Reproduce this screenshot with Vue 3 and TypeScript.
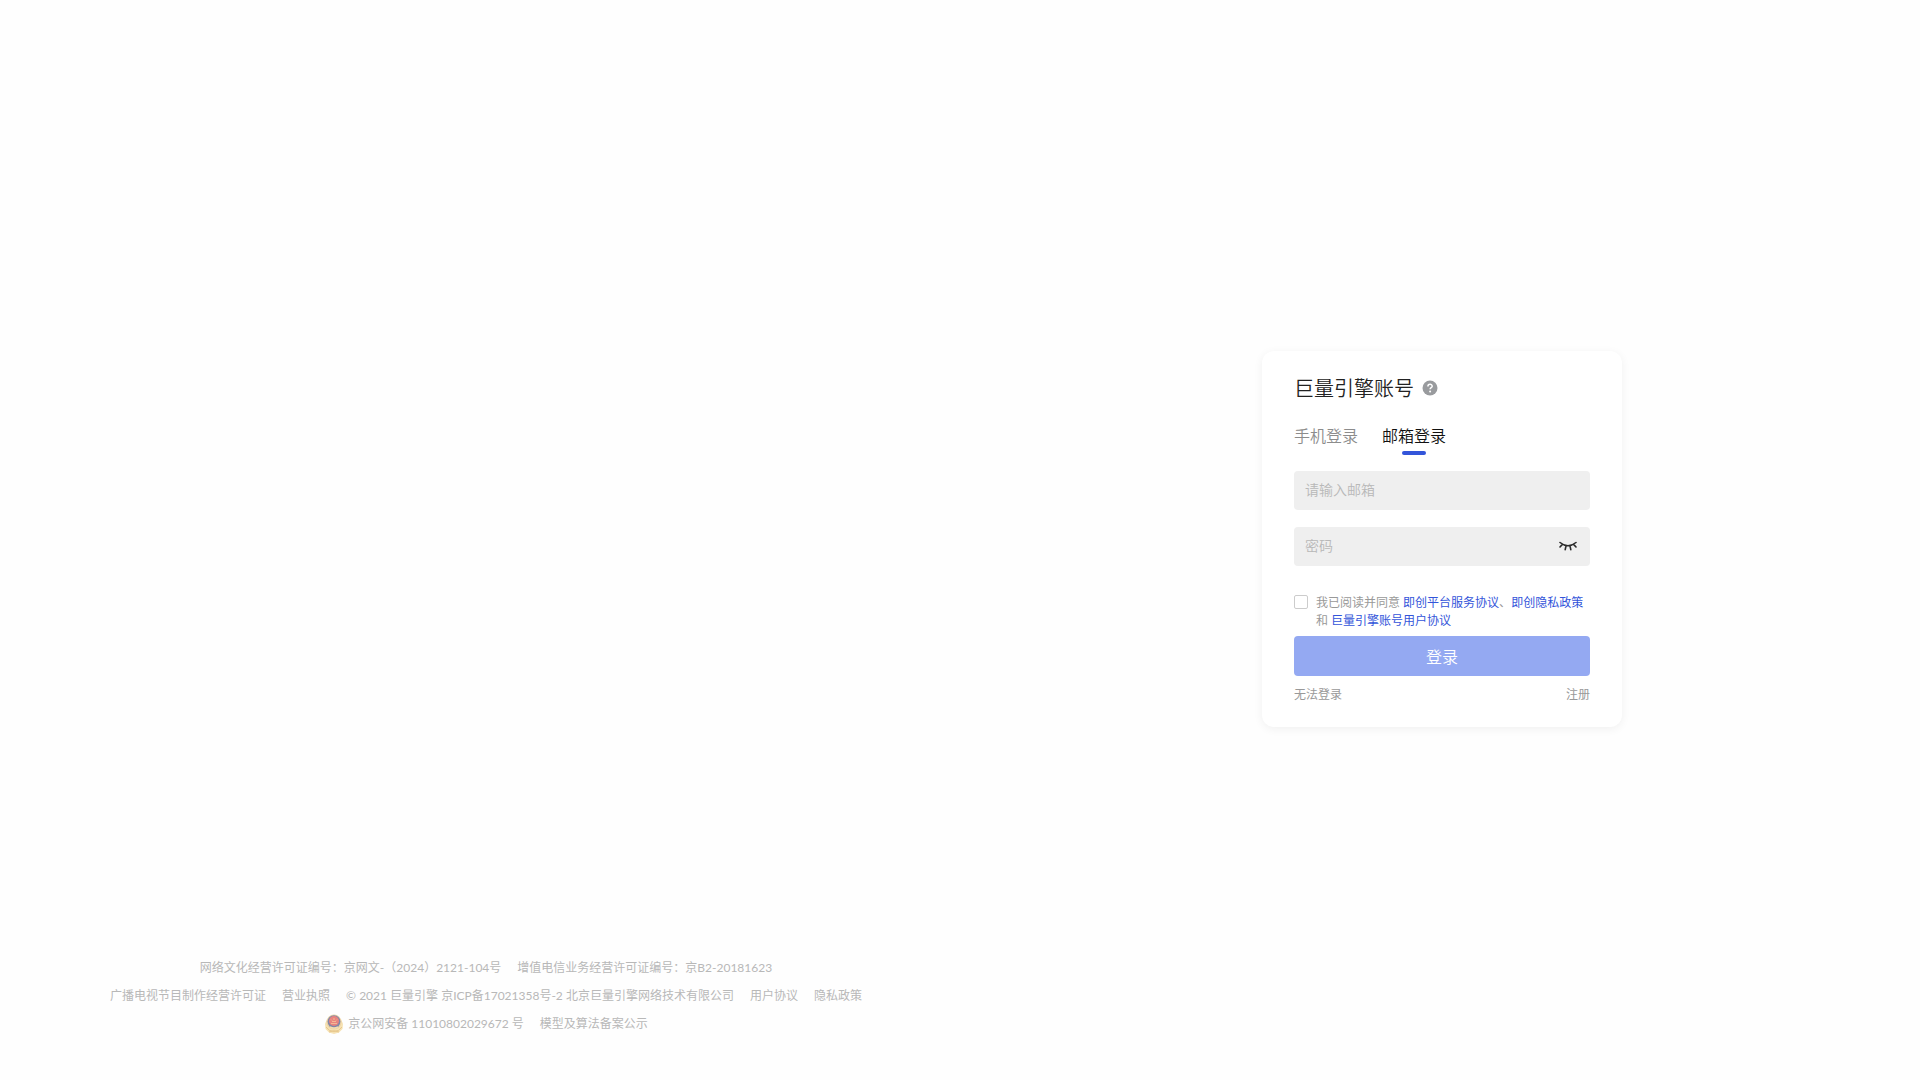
<script setup lang="ts">
import { ref } from 'vue'

interface FooterItem {
  text: string
  badge?: boolean
}

const email = ref('')
const password = ref('')
const agreed = ref(false)
const mode = ref('email')

const tabs = [
  { id: 'phone', label: '手机登录' },
  { id: 'email', label: '邮箱登录' },
]

const footerRows: FooterItem[][] = [
  [{ text: '网络文化经营许可证编号：京网文-（2024）2121-104号' }, { text: '增值电信业务经营许可证编号：京B2-20181623' }],
  [
    { text: '广播电视节目制作经营许可证' },
    { text: '营业执照' },
    { text: '© 2021 巨量引擎 京ICP备17021358号-2 北京巨量引擎网络技术有限公司' },
    { text: '用户协议' },
    { text: '隐私政策' },
  ],
  [{ text: '京公网安备 11010802029672 号', badge: true }, { text: '模型及算法备案公示' }],
]
</script>

<template>
  <div class="page">
    <section class="side">
      <footer class="footer">
        <div v-for="(row, i) in footerRows" :key="i" class="footer-row">
          <a v-for="item in row" :key="item.text" href="#" class="footer-link">
            <svg v-if="item.badge" class="badge" viewBox="0 0 20 20" aria-hidden="true">
              <path d="M3 5 1 10 1.500 15 5 18.500 10 20 15 18.500 18.500 15 19 10 17 5Z" fill="#f6e2b4" />
              <path d="M2 13Q5 17.500 10 17.500T18 13M5 18Q10 15.500 15 18" fill="none" stroke="#e8c88c" />
              <circle cx="10" cy="8" r="7.500" fill="#ecd3a4" />
              <circle cx="10" cy="7.600" r="6.400" fill="#8187a8" />
              <circle cx="10" cy="7" r="5" fill="#e8837e" />
              <path d="M7 9.500h6M8 7.500h4M10 4v2M7 5.500l1 1M13 5.500l-1 1" stroke="#f3b894" fill="none" />
              <path d="M6 12.800Q10 15 14 12.800" fill="none" stroke="#f3dfb2" stroke-width="1.500" />
            </svg>
            <span>{{ item.text }}</span>
          </a>
        </div>
      </footer>
    </section>

    <main class="main">
      <form class="card" @submit.prevent>
        <h1 class="title">
          巨量引擎账号
          <svg class="help" viewBox="0 0 16 16" aria-hidden="true">
            <circle cx="8" cy="8" r="7.500" fill="#999b9e" />
            <path d="M5.900 6.400C5.900 3.500 10.200 3.600 10.200 6.200 10.200 7.700 8.100 7.600 8.100 9.300" fill="none" stroke="#fff" stroke-width="1.500" />
            <circle cx="8.100" cy="11.500" r="1" fill="#fff" />
          </svg>
        </h1>

        <div class="tabs" role="tablist">
          <button
            v-for="tab in tabs"
            :key="tab.id"
            type="button"
            role="tab"
            class="tab"
            :class="{ active: mode === tab.id }"
            :aria-selected="mode === tab.id"
            @click="mode = tab.id"
          >
            {{ tab.label }}
          </button>
        </div>

        <div class="field">
          <input v-model="email" type="text" placeholder="请输入邮箱" aria-label="邮箱" />
        </div>
        <div class="field">
          <input v-model="password" type="password" placeholder="密码" aria-label="密码" />
          <button type="button" class="eye" aria-label="显示密码">
            <svg viewBox="0 0 18 10" aria-hidden="true">
              <path
                d="M1 1.500Q9 8 17 1.500M3.400 3.400 1 6M14.600 3.400 17 6M7 5 6.200 8.600M11 5l.8 3.600"
                fill="none"
                stroke="#2a2a2a"
                stroke-width="1.600"
                stroke-linecap="round"
              />
            </svg>
          </button>
        </div>

        <div class="agree">
          <input id="agree" v-model="agreed" type="checkbox" />
          <p>
            <label for="agree">我已阅读并同意</label>&nbsp;<a href="#">即创平台服务协议</a>、<a href="#">即创隐私政策</a>
            和 <a href="#">巨量引擎账号用户协议</a>
          </p>
        </div>

        <button type="submit" class="submit">登录</button>

        <div class="links">
          <a href="#">无法登录</a>
          <a href="#">注册</a>
        </div>
      </form>
    </main>
  </div>
</template>

<style>
body {
  margin: 0;
  background: #fefefe;
}
</style>

<style scoped>
.page {
  display: grid;
  grid-template-columns: 964fr 956fr;
  min-height: 100vh;
  font-family: Lato, 'Noto Sans CJK SC', sans-serif;
  font-size: 12px;
  color: #999;
}
.page * {
  box-sizing: border-box;
}
a {
  color: inherit;
  text-decoration: none;
}
button,
input {
  font-family: inherit;
  font-weight: inherit;
}
.side {
  display: flex;
  flex-direction: column;
  justify-content: flex-end;
}
.footer {
  padding: 0 0 42px 8px;
  color: #b8b8b8;
}
.footer-row {
  display: flex;
  flex-wrap: wrap;
  justify-content: center;
  gap: 0 16px;
  line-height: 28px;
}
.footer-link {
  display: flex;
  align-items: center;
  gap: 4px;
}
.badge {
  width: 20px;
  height: 20px;
}
.main {
  display: flex;
  align-items: center;
  justify-content: center;
  padding-bottom: 2px;
}
.card {
  width: 360px;
  padding: 21px 32px 22px;
  border-radius: 12px;
  background: #fff;
  box-shadow: 0 2px 10px rgba(0, 0, 0, 0.06);
}
.title {
  display: flex;
  align-items: center;
  gap: 8px;
  margin: 0 0 15px;
  font-size: 20px;
  font-weight: 350;
  line-height: 32px;
  color: #222;
}
.help {
  width: 16px;
  height: 16px;
}
.tabs {
  display: flex;
  gap: 24px;
  margin-bottom: 16px;
}
.tab {
  position: relative;
  padding: 5px 0 7px;
  border: 0;
  background: none;
  font-size: 16px;
  font-weight: 350;
  line-height: 24px;
  color: #8c8c8c;
}
.tab.active {
  color: #111;
}
.tab.active::after {
  content: '';
  position: absolute;
  bottom: 0;
  left: 50%;
  width: 24px;
  height: 4px;
  margin-left: -12px;
  border-radius: 2px;
  background: #3355da;
}
.field {
  display: flex;
  align-items: center;
  height: 39px;
  margin-bottom: 17px;
  padding: 0 13px 2px 11px;
  border-radius: 4px;
  background: #efefef;
}
.field input {
  flex: 1;
  min-width: 0;
  padding: 0;
  border: 0;
  outline: 0;
  background: none;
  font-size: 14px;
  font-weight: 350;
  line-height: 20px;
  color: #333;
}
.field input::placeholder {
  color: #b8b8b8;
}
.eye {
  display: flex;
  padding: 0;
  border: 0;
  background: none;
}
.eye svg {
  width: 18px;
  height: 10px;
}
.agree {
  display: flex;
  gap: 8px;
  margin: 28px 0 6px;
  line-height: 18px;
}
.agree input {
  appearance: none;
  flex: none;
  width: 14px;
  height: 14px;
  margin: 1px 0;
  border: 1px solid #ccc;
  border-radius: 2px;
  background: #fff;
}
.agree input:checked {
  background: #3355da;
}
.agree p {
  margin: 0;
}
.agree a {
  color: #3355da;
}
.submit {
  display: block;
  width: 100%;
  height: 40px;
  padding: 0;
  border: 0;
  border-radius: 4px;
  background: #94a9f2;
  font-size: 16px;
  font-weight: 350;
  color: #fff;
}
.links {
  display: flex;
  justify-content: space-between;
  margin-top: 9px;
  line-height: 20px;
}
</style>
